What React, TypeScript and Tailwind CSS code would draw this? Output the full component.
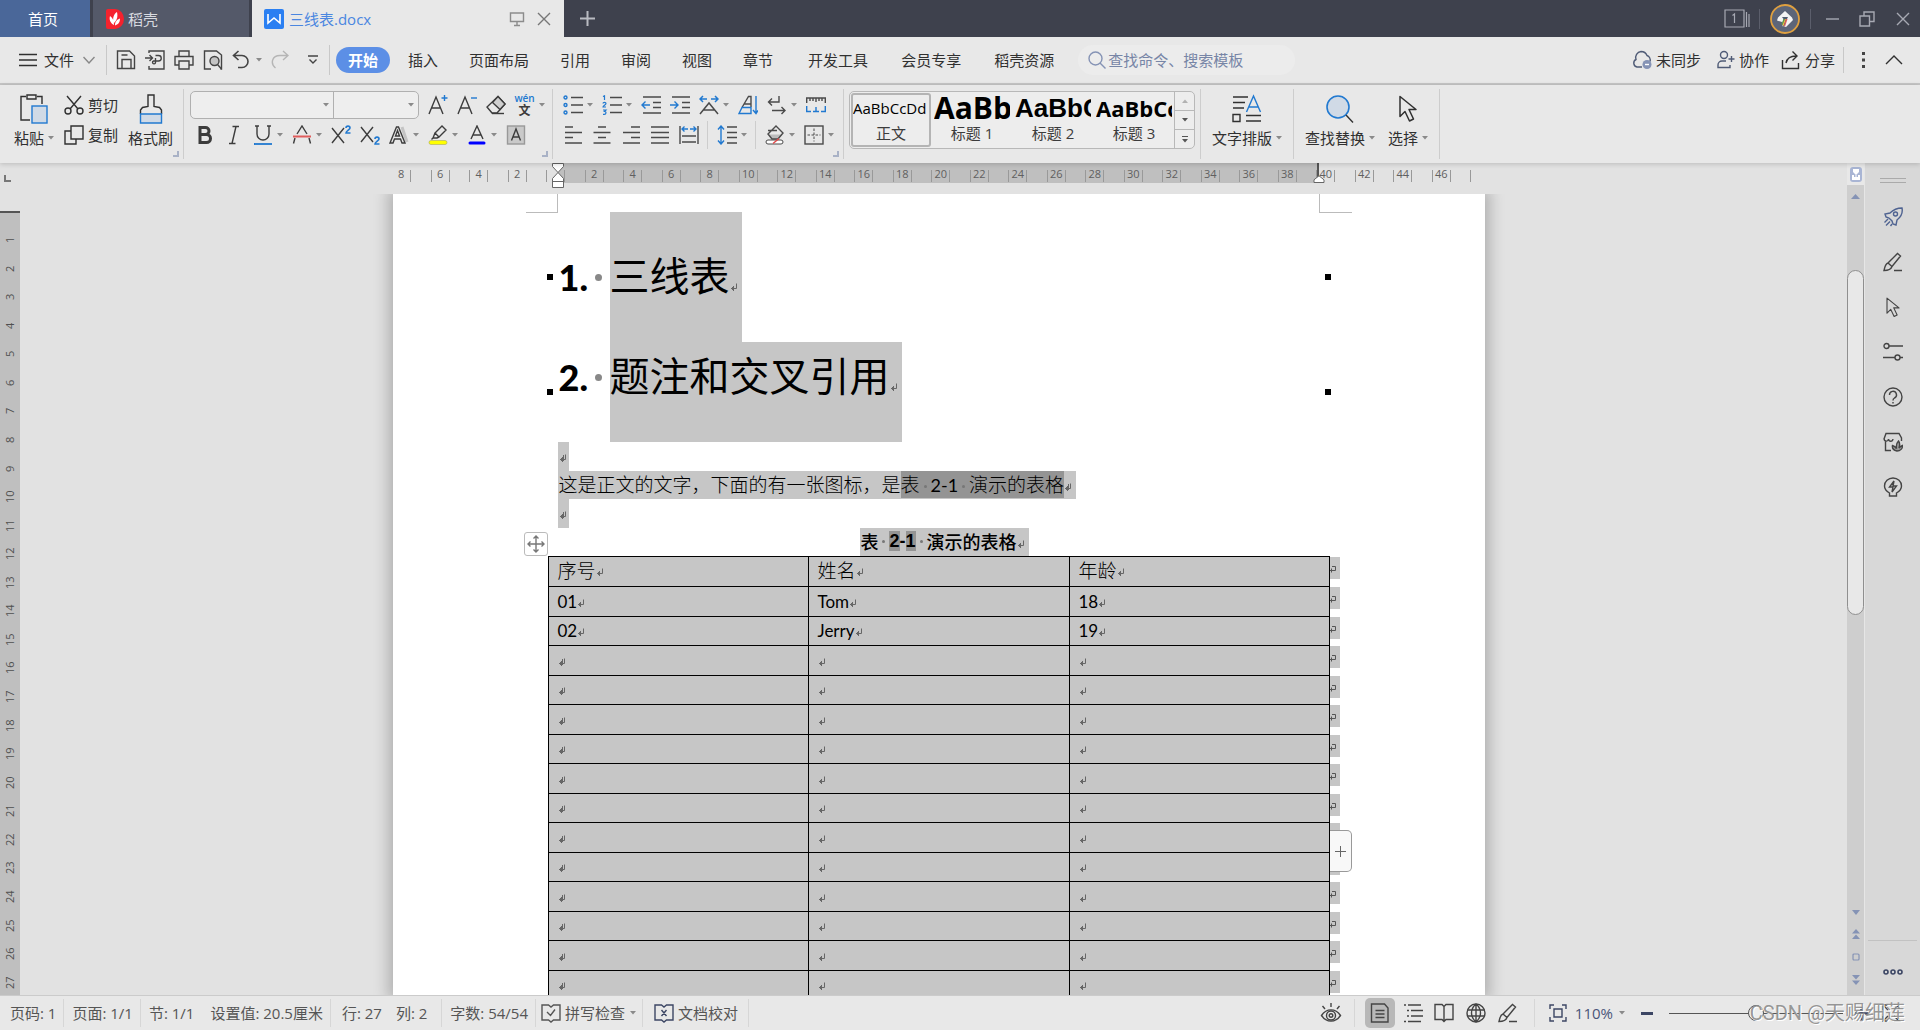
import type { ReactNode } from "react"
import clsx from "clsx"

const MENUS_A = ["插入", "页面布局", "引用", "审阅", "视图", "章节"]
const MENUS_B = ["开发工具", "会员专享", "稻壳资源"]

const STYLES = [
  { name: "正文", sample: "AaBbCcDd", font: "font-['Open_Sans'] text-[15px]" },
  { name: "标题 1", sample: "AaBb", font: "font-['Open_Sans'] text-[30px] font-bold" },
  { name: "标题 2", sample: "AaBbC", font: "font-['Liberation_Sans'] text-[26px] font-bold" },
  { name: "标题 3", sample: "AaBbCc", font: "font-['Open_Sans'] text-[22px] font-bold" },
]

const ROWS = [
  ["01", "Tom", "18"],
  ["02", "Jerry", "19"],
  ...Array.from({ length: 13 }, () => ["", "", ""]),
]

const H_RULER = [8, 6, 4, 2, 0, ...Array.from({ length: 23 }, (_, i) => (i + 1) * 2)]
const V_RULER = Array.from({ length: 27 }, (_, i) => i + 1)

const BLUE = "#2179d0"

type SvgProps = { w?: number; h?: number; sw?: number; className?: string; children: ReactNode }

function Svg({ w = 20, h = 20, sw = 1.4, className, children }: SvgProps) {
  return (
    <svg
      width={w}
      height={h}
      viewBox={`0 0 ${w} ${h}`}
      fill="none"
      stroke="currentColor"
      strokeWidth={sw}
      className={clsx("shrink-0", className)}
      aria-hidden="true"
    >
      {children}
    </svg>
  )
}

function Caret({ className }: { className?: string }) {
  return (
    <svg width="6" height="4" viewBox="0 0 6 4" className={clsx("shrink-0 fill-[#8a8a8a]", className)} aria-hidden="true">
      <path d="M0 0h6L3 3.6z" />
    </svg>
  )
}

function Tool({ label, drop, children }: { label: string; drop?: boolean; children: ReactNode }) {
  return (
    <button aria-label={label} className="flex h-7 shrink-0 items-center">
      <span className="flex w-[29px] justify-center">{children}</span>
      {drop && (
        <span className="w-[10px]">
          <Caret />
        </span>
      )}
    </button>
  )
}

function BigTool({ label, drop, children }: { label: string; drop?: boolean; children: ReactNode }) {
  return (
    <button className="flex shrink-0 flex-col items-center">
      <span className="flex h-9 items-center">{children}</span>
      <span className="flex items-center gap-1 leading-[22px]">
        {label}
        {drop && <Caret />}
      </span>
    </button>
  )
}

function Divider() {
  return <div className="my-1 w-px shrink-0 self-stretch bg-[#cdcdcd]" />
}

function Corner() {
  return <div className="absolute right-1 bottom-1.5 size-1.5 border-r-2 border-b-2 border-[#a9b2c6]" />
}

function Mark({ bold }: { bold?: boolean }) {
  return (
    <Svg w={8} h={9} sw={1} className="inline-block text-[#666]">
      <path d="M6.500 0.500v5H1M3.500 3v5M2.500 4v3M1.500 5v1" />
      {bold && <path d="M4.500 1v6" />}
    </Svg>
  )
}

function Cursor({ w, h }: { w: number; h: number }) {
  return (
    <svg width={w} height={h} viewBox="0 0 20 28" fill="none" stroke="currentColor" strokeWidth="1.5" strokeLinejoin="round" aria-hidden="true">
      <path d="M2 1.5v20l5-5 4.500 9.500 4-2-4.500-9.500h7z" />
    </svg>
  )
}

function PenIcon() {
  return (
    <Svg>
      <path d="M5 11L14.500 1.500l3 2.500L9 14.500z M5 11c-3 1-3 4-4 7.500 4 0 7-1 8-4M11 18.500h8" />
    </Svg>
  )
}

function TitleBar() {
  return (
    <header className="flex h-[37px] shrink-0 bg-[#3e414d] text-[#d8dae0]">
      <button className="w-[90px] bg-[#4a6799] pr-1 text-white">首页</button>
      <button className="ml-[3px] flex w-[156px] items-center gap-1 bg-[#545969] pl-[13px]">
        <svg width="18" height="20" viewBox="0 0 18 20" aria-hidden="true">
          <path d="M2 0h7a9 10 0 0 1 0 20H2a2 2 0 0 1-2-2V2a2 2 0 0 1 2-2z" fill="#f5222d" />
          <path d="M8 16C4 14 3 10 4 7c3 2 4 5 4 9zM8 14C6 9 8 5 11 3c1 5 0 8-3 11zM9 16.500c0-4 2-6 5-7 0 4-2 6-5 7z" fill="#fff" />
        </svg>
        稻壳
      </button>
      <div className="ml-[3px] flex w-[312px] items-center bg-[#e8e8e8] pl-3">
        <svg width="20" height="20" viewBox="0 0 20 20" aria-hidden="true">
          <rect width="20" height="20" rx="2" fill="#2a7ff2" />
          <path d="M4 5v9l6-5 6 5V5" fill="none" stroke="#fff" strokeWidth="1.600" />
        </svg>
        <span className="ml-[5px] text-[#4a86e0]">三线表.docx</span>
        <span className="ml-auto text-[#8c8c8c]">
          <Svg w={16} h={16}>
            <path d="M1.500 2h13v8.500h-13zM8 10.500v3.500M5 14.500h6" />
          </Svg>
        </span>
        <button aria-label="关闭标签" className="mr-[13px] ml-3 text-[#777]">
          <Svg w={14} h={14}>
            <path d="M1 1l12 12M13 1L1 13" />
          </Svg>
        </button>
      </div>
      <button aria-label="新建" className="w-[46px] pl-4 text-[#b9bbc2]">
        <Svg w={15} h={15} sw={2}>
          <path d="M7.500 0v15M0 7.500h15" />
        </Svg>
      </button>
      <div className="ml-auto flex items-center text-[#a7a9b3]">
        <button aria-label="窗口列表">
          <Svg w={26} h={19} sw={1.2}>
            <path d="M1 1h19v17H1zM22.500 3v15M25 5v13M8.500 6.500l2-1.500v9" />
          </Svg>
        </button>
        <span className="ml-[9px] h-5 w-px bg-[#5b5e6b]" />
        <button aria-label="账户" className="mx-2.5">
          <svg width="30" height="30" viewBox="0 0 30 30" aria-hidden="true">
            <circle cx="15" cy="15" r="14" fill="#5d6578" stroke="#dfa040" strokeWidth="1.800" />
            <path d="M15 7l7 6.500 1 2.500-7 7-4-1v-4l-5-1.500 1-3z" fill="#f4f4f4" />
            <path d="M12 13h6l-1 2-3 8-2-2 1.500-6z" fill="#4f5b6e" />
            <path d="M13.500 15l1.500 0-2.500 6-1-1z" fill="#5a9e4b" />
            <path d="M15 15l1 0-2.500 7-1-1z" fill="#f0c040" />
            <path d="M16 15l1.500 0-2.500 7.500-1-.5z" fill="#e05a5a" />
          </svg>
        </button>
        <span className="h-5 w-px bg-[#5b5e6b]" />
        <button aria-label="最小化" className="ml-[15px]">
          <Svg w={13} h={16}>
            <path d="M0 8h13" />
          </Svg>
        </button>
        <button aria-label="还原" className="ml-5">
          <Svg w={16} h={16}>
            <path d="M1 5h9.500v10H1zM5 5V1h10v9.500h-4.500" />
          </Svg>
        </button>
        <button aria-label="关闭" className="mr-2.5 ml-[21px]">
          <Svg w={14} h={14}>
            <path d="M1 1l12 12M13 1L1 13" />
          </Svg>
        </button>
      </div>
    </header>
  )
}

function MenuBar() {
  return (
    <nav className="flex h-12 shrink-0 items-center border-b-2 border-[#c6c6c6] text-[#303030]">
      <button className="ml-[19px] flex items-center text-[#303030]">
        <Svg w={18} h={14}>
          <path d="M0 1.500h18M0 7h18M0 12.500h18" />
        </Svg>
        <span className="ml-[7px]">文件</span>
        <Svg w={12} h={8} className="ml-[9px] text-[#888]">
          <path d="M0.500 1l5.500 6 5.500-6" />
        </Svg>
      </button>
      <span className="ml-[11px] h-[30px] w-px bg-[#c8c8c8]" />
      <div className="ml-[9px] flex items-center gap-[9px] text-[#444]">
        <button aria-label="保存">
          <Svg>
            <path d="M1.500 1h12l5 5v12.500h-17zM6 18.500V9.500h9v9M5.500 5h6" />
          </Svg>
        </button>
        <button aria-label="输出为PDF">
          <Svg>
            <path d="M4 3V1h15v18H4v-3M0 8h7M4.500 5l3 3-3 3M10.500 5.500h3a2.500 2.500 0 0 1 0 5.500h-5a1.500 1.500 0 1 0 2 1.500V8" />
          </Svg>
        </button>
        <button aria-label="打印">
          <Svg>
            <path d="M5 6V1h10v5M5 15H1V6.500h18V15h-4M5 11h10v8H5z" />
          </Svg>
        </button>
        <button aria-label="打印预览">
          <Svg>
            <path d="M8 19H1.500V1h12l5 4v14h-1" />
            <circle cx="11.500" cy="11" r="4.500" fill="#c4c4c4" />
            <path d="M14.500 14.500l4 4.500" />
          </Svg>
        </button>
        <button aria-label="撤销" className="flex items-center gap-1.5">
          <Svg w={18} sw={1.6}>
            <path d="M6.500 1L1.500 5.500l5 4.500M1.500 5.500H10a6 6 0 0 1 0 12H6" />
          </Svg>
          <Caret />
        </button>
        <button aria-label="重做" className="text-[#b5b5b5]">
          <Svg w={18}>
            <path d="M12 1l5 4.500-5 4.500M17 5.500H9c-8 0-10 8-4.500 12.500" />
          </Svg>
        </button>
        <button aria-label="自定义快速访问工具栏" className="ml-2.5">
          <Svg w={10} h={10}>
            <path d="M0 1h10M1.500 4.500L5 8l3.500-3.500" />
          </Svg>
        </button>
      </div>
      <span className="ml-[11px] h-[30px] w-px bg-[#c8c8c8]" />
      <button className="ml-1.5 h-[26px] w-[54px] rounded-full bg-[#5c8fe6] font-bold text-white">开始</button>
      <div className="ml-[18px] flex gap-[31px]">
        {MENUS_A.map((m) => (
          <button key={m}>{m}</button>
        ))}
      </div>
      <div className="ml-[35px] flex gap-[33px]">
        {MENUS_B.map((m) => (
          <button key={m}>{m}</button>
        ))}
      </div>
      <label className="ml-6 flex h-[30px] w-[217px] items-center gap-0.5 rounded-full bg-[#ececec] pl-2.5 text-[#8593b5]">
        <Svg w={18} h={18}>
          <circle cx="7.500" cy="7.500" r="6.500" />
          <path d="M12 12l5.500 5.500" />
        </Svg>
        <input
          aria-label="查找命令、搜索模板"
          placeholder="查找命令、搜索模板"
          className="min-w-0 flex-1 bg-transparent outline-none placeholder:text-[#7785a6]"
        />
      </label>
      <div className="ml-auto flex items-center">
        <button className="flex items-center gap-1">
          <Svg className="text-[#4f5b76]">
            <path d="M10 17H5a4 4 0 0 1-1-7.500A6 6 0 0 1 9 1.500c3 0 5 1.500 6 4a5 5 0 0 1 3 6" />
            <circle cx="15" cy="14.500" r="4.500" fill="#8593b5" stroke="none" />
            <path d="M13 14.500h4" stroke="#fff" />
          </Svg>
          未同步
        </button>
        <button className="ml-4 flex items-center gap-1">
          <Svg w={18} className="text-[#4f5b76]">
            <circle cx="7" cy="5" r="3.500" />
            <path d="M9 11H5a4 4 0 0 0-4 4v2.500h12V15M14.500 6v6M11.500 9h6" />
          </Svg>
          协作
        </button>
        <button className="ml-3 flex items-center gap-1">
          <Svg>
            <path d="M1.500 10v8.500h16V13M5 13c1-5 4-7 10-7M11.500 1.500L16 6l-4.500 4.500" />
          </Svg>
          分享
        </button>
        <span className="ml-2 h-[26px] w-px bg-[#c8c8c8]" />
        <button aria-label="更多" className="ml-[18px]">
          <svg width="3" height="16" viewBox="0 0 3 16" fill="#444" aria-hidden="true">
            <path d="M0 0h3v3H0zM0 6.500h3v3H0zM0 13h3v3H0z" />
          </svg>
        </button>
        <button aria-label="收起功能区" className="mr-[17px] ml-5">
          <Svg w={18} h={10}>
            <path d="M1 9l8-8 8 8" />
          </Svg>
        </button>
      </div>
    </nav>
  )
}

function FontGroup() {
  return (
    <div className="relative flex flex-col gap-0.5 pt-1.5 pr-[3px] pl-1.5 text-[#3c3c3c]">
      <div className="flex">
        <div className="mr-1 flex h-7 w-[229px] rounded-[5px] border border-[#b0b0b0] bg-[#eee]">
          <label className="relative flex flex-1 items-center border-r border-[#b0b0b0]">
            <select aria-label="字体" className="h-full w-full appearance-none bg-transparent" />
            <Caret className="absolute right-1" />
          </label>
          <label className="relative flex w-[84px] items-center">
            <select aria-label="字号" className="h-full w-full appearance-none bg-transparent" />
            <Caret className="absolute right-1" />
          </label>
        </div>
        <Tool label="增大字号">
          <Svg>
            <path d="M1 19L8 2l7 17M3.500 13h9" />
            <path d="M16.500 0v6M13.500 3h6" stroke={BLUE} />
          </Svg>
        </Tool>
        <Tool label="减小字号">
          <Svg>
            <path d="M1 19L8 2l7 17M3.500 13h9" />
            <path d="M14 3h6" stroke={BLUE} />
          </Svg>
        </Tool>
        <Tool label="清除格式">
          <Svg>
            <path d="M12 1.500L19 9l-8 9H6l-5-6z" />
            <path d="M12 1.500L19 9l-5 5.500L6.500 7.500z" fill="#cfcfcf" />
            <path d="M6 18.500h12" />
          </Svg>
        </Tool>
        <Tool label="拼音指南" drop>
          <span className="flex flex-col items-center">
            <span className="font-['Open_Sans'] text-[10px] leading-[11px] font-semibold text-[#2179d0]">wén</span>
            <span className="text-[12px] leading-[14px] font-bold">文</span>
          </span>
        </Tool>
      </div>
      <div className="flex">
        <Tool label="加粗">
          <Svg sw={3}>
            <path d="M5 2.500h5.500a3.500 3.500 0 0 1 0 7H5zM5 9.500h6.500a4 4 0 0 1 0 8H5z" />
          </Svg>
        </Tool>
        <Tool label="倾斜">
          <Svg>
            <path d="M8.500 1.500H15M5 18.500h6.500M12 1.500L8 18.500" />
          </Svg>
        </Tool>
        <Tool label="下划线" drop>
          <Svg>
            <path d="M4 1v8a6 6 0 0 0 12 0V1M2 1h4M14 1h4" />
            <path d="M1 19h18" stroke={BLUE} strokeWidth="1.800" />
          </Svg>
        </Tool>
        <Tool label="删除线" drop>
          <Svg>
            <path d="M5 9L10 1l5 8M3 13l-1.500 5.500M17 13l1.500 5.500" />
            <path d="M1 11.500h18" stroke="#e05c5c" strokeWidth="2" />
          </Svg>
        </Tool>
        <Tool label="上标">
          <Svg>
            <path d="M1 3l12 15M13 3L1 18" />
            <path d="M15 3c0-2.500 4-2.500 4 0 0 1.500-4 3-4 5h4.500" stroke={BLUE} strokeWidth="1.600" />
          </Svg>
        </Tool>
        <Tool label="下标">
          <Svg>
            <path d="M1 2l12 15M13 2L1 17" />
            <path d="M15 14c0-2.500 4-2.500 4 0 0 1.500-4 3-4 5h4.500" stroke={BLUE} strokeWidth="1.600" />
          </Svg>
        </Tool>
        <Tool label="文字效果" drop>
          <Svg>
            <path d="M13 2l5 15" stroke="#c4c4c4" strokeWidth="3" />
            <path d="M1 18L7.500 2h2L16 18h-3l-1.500-4h-6L4 18zM6.500 11h4L8.500 5.500z" />
          </Svg>
        </Tool>
        <Tool label="突出显示" drop>
          <Svg>
            <path d="M7 8l7-7 4 4-7 7zM7 8l-2 5h4l2-1M5 13l-1.500 1.500" />
            <rect x="1" y="15.500" width="18" height="4" rx="2" fill="#ff0" stroke="#a8a860" strokeWidth=".6" />
          </Svg>
        </Tool>
        <Tool label="字体颜色" drop>
          <Svg>
            <path d="M4 14L10 1l6 13M6 10h8" />
            <rect x="1.500" y="16.500" width="17" height="3" rx="1.500" fill="#00f" stroke="none" />
          </Svg>
        </Tool>
        <Tool label="字符底纹">
          <Svg>
            <rect x="1.500" y="1" width="17" height="18" fill="#c9c9c9" stroke="#999" />
            <path d="M5.500 15.500L10 4l4.500 11.500M7 12h6" />
          </Svg>
        </Tool>
      </div>
      <Corner />
    </div>
  )
}

function ParagraphGroup() {
  return (
    <div className="relative flex flex-col gap-0.5 px-[5px] pt-1.5 text-[#4a4a4a]">
      <div className="flex">
        <Tool label="项目符号" drop>
          <Svg>
            <path d="M8 2.500h12M8 10h12M8 17.500h12" />
            <g stroke={BLUE}>
              <circle cx="2.500" cy="2.500" r="1.500" />
              <circle cx="2.500" cy="10" r="1.500" />
              <circle cx="2.500" cy="17.500" r="1.500" />
            </g>
          </Svg>
        </Tool>
        <Tool label="编号" drop>
          <Svg>
            <path d="M8 2.500h12M8 10h12M8 17.500h12" />
            <path d="M1 1.500L2.500 .8V5M1 8.500c0-1.500 3-1.500 3 0C4 9.500 1 11 1 12h3M1 15h3l-1.500 1.500c2 0 2 3-.5 2.800H1" stroke={BLUE} strokeWidth="1.200" />
          </Svg>
        </Tool>
        <Tool label="减少缩进量">
          <Svg>
            <path d="M2 2h18M12 7.500h8M12 12.500h8M2 18h18" />
            <path d="M9 10H1M4.500 6.500L1 10l3.500 3.500" stroke={BLUE} />
          </Svg>
        </Tool>
        <Tool label="增加缩进量">
          <Svg>
            <path d="M2 2h18M12 7.500h8M12 12.500h8M2 18h18" />
            <path d="M0 10h8M4.500 6.500L8 10l-3.500 3.500" stroke={BLUE} />
          </Svg>
        </Tool>
        <Tool label="中文版式" drop>
          <Svg sw={1.5}>
            <path d="M1 19L10 8l9 11M4.500 15h11" />
            <path d="M8 4H1M4 1L1 4l3 3M12 4h7M16 1l3 3-3 3" stroke={BLUE} />
          </Svg>
        </Tool>
        <Tool label="排序">
          <Svg>
            <path d="M4 12.500L10.500 1.500H13V12M6.500 9H13" />
            <path d="M4 12.500L1 18.500h12V12.500zM18 1v17M15 15l3 3.500 2-3" stroke={BLUE} />
          </Svg>
        </Tool>
        <Tool label="显示段落标记" drop>
          <Svg>
            <path d="M12 1v6H2M5 3.500L1.500 7 5 10.500M5 15.500h13M14.500 12l3.500 3.500-3.500 3.500" />
          </Svg>
        </Tool>
        <Tool label="制表位">
          <Svg>
            <path d="M.7 8V3h18.600v5M4 3v3M7 3v3M10 3v4M13 3v3M16 3v3" />
            <path d="M.7 11v5.500H5M7 16.500h6M10 12v4.500M15 16.500h4.300V11" stroke={BLUE} />
          </Svg>
        </Tool>
      </div>
      <div className="flex">
        <Tool label="左对齐">
          <Svg>
            <path d="M2 2h8M2 7.500h17M2 12.500h8M2 18h17" />
          </Svg>
        </Tool>
        <Tool label="居中对齐">
          <Svg>
            <path d="M6 2h8M1.500 7.500h17M6 12.500h8M1.500 18h17" />
          </Svg>
        </Tool>
        <Tool label="右对齐">
          <Svg>
            <path d="M10 2h9M2 7.500h17M10 12.500h9M2 18h17" />
          </Svg>
        </Tool>
        <Tool label="两端对齐">
          <Svg>
            <path d="M1 2h18M1 7.500h18M1 12.500h18M1 18h18" />
          </Svg>
        </Tool>
        <Tool label="分散对齐">
          <Svg>
            <path d="M1 1v18M19 1v18M3 11h14M3 17h14" />
            <path d="M9 4H3M5.500 1.500L3 4l2.500 2.500M11 4h6M14.500 1.500L17 4l-2.500 2.500" stroke={BLUE} />
          </Svg>
        </Tool>
        <div className="mx-1 w-px bg-[#cdcdcd]" />
        <Tool label="行距" drop>
          <Svg>
            <path d="M10 2h10M10 7.500h10M10 12.500h10M10 18h10" />
            <path d="M4 1v18M1 4.500L4 1l3 3.500M1 15.500L4 19l3-3.500" stroke={BLUE} />
          </Svg>
        </Tool>
        <div className="mx-1 w-px bg-[#cdcdcd]" />
        <Tool label="底纹颜色" drop>
          <Svg>
            <path d="M4 9.500h13l-4 4.500H7z" fill="#bbb" stroke="none" />
            <path d="M3 9L11 1l7 7-5 6H7zM3 5.500h9" />
            <rect x="1" y="15" width="17" height="4" rx="2" fill="#fff" strokeWidth="1" />
            <path d="M8 18.500l6-5" stroke="#e04848" />
          </Svg>
        </Tool>
        <Tool label="边框" drop>
          <Svg>
            <rect x="1" y="1" width="18" height="18" />
            <path d="M10 3.500v13M3.500 10h13" strokeDasharray="2.500 1.500" strokeWidth="1" />
          </Svg>
        </Tool>
      </div>
      <Corner />
    </div>
  )
}

function StyleGallery() {
  return (
    <div className="px-[5px] pt-1.5">
      <div className="flex h-[58px] w-[346px] rounded-[5px] border border-[#b8b8b8] bg-[#ededed]">
        <div className="flex flex-1 items-center gap-px pl-px">
          {STYLES.map((s, i) => (
            <button
              key={s.name}
              className={clsx(
                "flex h-[54px] w-20 flex-col items-center rounded-[3px] border-2 text-[#3c3c3c]",
                i === 0 ? "border-[#b4b4b4]" : "border-transparent",
              )}
            >
              <span
                className={clsx(
                  "flex h-8 w-full items-center overflow-hidden leading-none whitespace-nowrap text-black",
                  s.font,
                )}
              >
                {s.sample}
              </span>
              <span className="leading-6">{s.name}</span>
            </button>
          ))}
        </div>
        <div className="flex w-5 flex-col divide-y divide-[#b8b8b8] border-l border-[#b8b8b8]">
          <button aria-label="向上" className="flex flex-1 items-center justify-center">
            <Caret className="rotate-180 opacity-60" />
          </button>
          <button aria-label="向下" className="flex flex-1 items-center justify-center">
            <Caret className="fill-[#555]" />
          </button>
          <button aria-label="其他样式" className="flex flex-1 flex-col items-center justify-center gap-0.5">
            <span className="h-px w-1.5 bg-[#555]" />
            <Caret className="fill-[#555]" />
          </button>
        </div>
      </div>
    </div>
  )
}

function Ribbon() {
  return (
    <section className="relative z-10 flex h-[78px] shrink-0 bg-[#e8e8e8] text-[#303030] shadow-[0_1px_5px_rgba(0,0,0,0.18)]">
      <div className="relative flex items-start pt-1.5 pr-2.5 pl-[14px]">
        <BigTool label="粘贴" drop>
          <Svg w={28} h={30}>
            <path d="M6 2.500H1V26h9M17 2.500h5V10" />
            <path d="M7 1h9v4H7z" />
            <rect x="12" y="12" width="15" height="17" fill="#d0dae6" stroke={BLUE} />
          </Svg>
        </BigTool>
        <div className="ml-2.5 flex flex-col gap-0.5">
          <button className="flex h-7 items-center gap-1">
            <Svg>
              <path d="M3 1l11 13M17 1L6 14" />
              <circle cx="4" cy="16" r="3" />
              <circle cx="16" cy="16" r="3" />
            </Svg>
            剪切
          </button>
          <button className="flex h-7 items-center gap-1">
            <Svg>
              <path d="M7 1h12v13H7zM7 6H1v13h11v-5" />
            </Svg>
            复制
          </button>
        </div>
        <div className="ml-2.5">
          <BigTool label="格式刷">
            <Svg w={24} h={30}>
              <path d="M1.500 20v-4l2-2.500 5.500-1V1h6v11.500l5.500 1 2 2.500v4" />
              <path d="M1.500 20h21v9h-21z" fill="#d0dae6" stroke={BLUE} />
            </Svg>
          </BigTool>
        </div>
        <Corner />
      </div>
      <Divider />
      <FontGroup />
      <Divider />
      <ParagraphGroup />
      <Divider />
      <StyleGallery />
      <Divider />
      <div className="px-[11px] pt-1.5">
        <BigTool label="文字排版" drop>
          <Svg w={30} h={30}>
            <path d="M1 3h15M1 8.500h12M1 14h11M1 20.500h7v7H1zM14 21.500h15M14 27h15" />
            <path d="M14.500 18L21.500 2l7 16M17 13h9" stroke={BLUE} />
          </Svg>
        </BigTool>
      </div>
      <Divider />
      <div className="flex gap-[13px] px-[11px] pt-1.5">
        <BigTool label="查找替换" drop>
          <Svg w={30} h={30}>
            <circle cx="13" cy="13" r="11" fill="#d0dae6" stroke={BLUE} strokeWidth="1.600" />
            <path d="M21 21l7 7.500" />
          </Svg>
        </BigTool>
        <BigTool label="选择" drop>
          <Cursor w={20} h={28} />
        </BigTool>
      </div>
      <Divider />
    </section>
  )
}

function HorizontalRuler() {
  return (
    <div className="flex h-[31px] shrink-0 font-['Open_Sans'] text-[11px] text-[#606060]">
      <div className="w-[30px] shrink-0 pt-3 pl-1">
        <div className="size-[7px] border-b-2 border-l-2 border-[#777]" />
      </div>
      <div className="min-w-0 flex-1">
        <div className="relative mx-auto grid w-[1112px]">
          <div className="col-start-1 row-start-1 ml-[175px] h-5 w-[761px] border-r-2 border-[#555] bg-[#bfbfbf]" />
          <div className="col-start-1 row-start-1 flex w-[1088px] pt-[7px]">
            {H_RULER.map((n, i) => (
              <div key={i} className="flex flex-1 justify-center">
                <span
                  className={clsx(
                    "flex h-3 w-1/2 justify-center border-r border-[#999] leading-[7px]",
                    i > 0 && "border-l",
                  )}
                >
                  {n > 0 && n}
                </span>
              </div>
            ))}
            <span className="h-3 w-[10px] shrink-0 border-r border-[#999]" />
          </div>
          {/* indent handles */}
          <svg className="absolute top-0 left-[169px]" width="12" height="26" viewBox="0 0 12 26" fill="#fff" stroke="#666" aria-hidden="true">
            <path d="M.5.5h11v3L6 9.500.5 3.500zM6 9.500l5.500 6v9H.5v-9zM.5 18.500h11" />
          </svg>
          <svg className="absolute top-3 left-[930px]" width="12" height="8" viewBox="0 0 12 8" fill="#fff" stroke="#666" aria-hidden="true">
            <path d="M6 .8l5 4v2.700H1V4.800z" />
          </svg>
        </div>
      </div>
    </div>
  )
}

function RowEnd() {
  return (
    <div className="flex h-[22px] items-center bg-[#c6c6c6] pt-1">
      <Svg w={8} h={9} sw={1} className="text-[#555]">
        <path d="M2 1.500h3.500v4H0M1.500 3.500v4" />
      </Svg>
    </div>
  )
}

function DocTable() {
  return (
    <table className="-ml-2.5 w-[792px] table-fixed border-collapse font-['Lato','Noto_Sans_CJK_SC',sans-serif] text-[17px] leading-[22px]">
      <colgroup>
        <col className="w-[260px]" />
        <col className="w-[261px]" />
        <col className="w-[260px]" />
        <col className="w-[11px]" />
      </colgroup>
      <thead>
        <tr className="h-[30px]">
          {["序号", "姓名", "年龄"].map((h) => (
            <th
              key={h}
              scope="col"
              className="border border-black bg-[#c6c6c6] pb-0.5 pl-[9px] text-left text-[19px] font-light"
            >
              {h}
              <Mark />
            </th>
          ))}
          <td className="p-0 align-top">
            <RowEnd />
          </td>
        </tr>
      </thead>
      <tbody>
        {ROWS.map((row, r) => (
          <tr key={r} className="odd:h-[30px] even:h-[29px]">
            {row.map((cell, c) => (
              <td key={c} className="border border-black bg-[#c6c6c6] py-0 pl-[9px]">
                {cell}
                <Mark bold={!cell && c === 0} />
              </td>
            ))}
            <td className="p-0 align-top">
              <RowEnd />
            </td>
          </tr>
        ))}
      </tbody>
    </table>
  )
}

function Dot() {
  return <span className="mx-1 inline-block size-[3px] rounded-full bg-[#777] align-middle" />
}

function EmptyLine() {
  return (
    <p className="flex h-[29px] w-[11px] items-center bg-[#c6c6c6] pt-1 pl-px">
      <Mark bold />
    </p>
  )
}

function Heading({ num, last, children }: { num: string; last?: boolean; children: ReactNode }) {
  return (
    <h1 className={clsx("flex", last ? "h-[100px]" : "h-[130px]")}>
      <span
        className={clsx(
          "flex w-[52px] items-center pl-px font-['Lato'] text-[36px] leading-[40px] font-black",
          last && "pb-[30px]",
        )}
      >
        {num}
        <span className="mr-2 ml-auto size-[7px] rounded-full bg-[#888]" />
      </span>
      <span
        className={clsx(
          "flex items-center bg-[#c6c6c6] pr-1 text-[40px] leading-[40px] font-normal",
          last && "pb-[30px]",
        )}
      >
        <span className="pb-1.5">{children}</span>
        <span className="flex pt-5">
          <Mark />
        </span>
      </span>
    </h1>
  )
}

function Page() {
  return (
    <div className="relative mx-auto h-full w-[1092px] bg-white px-[165px] pt-[18px] font-['Noto_Sans_CJK_SC',sans-serif] text-black shadow-[0_0_14px_5px_rgba(0,0,0,0.22)]">
      <div className="absolute top-0 left-[133px] h-[19px] w-8 border-r border-b border-[#bbb]" />
      <div className="absolute top-0 right-[133px] h-[19px] w-[33px] border-b border-l border-[#bbb]" />

      {/* heading frame handles */}
      <div className="absolute top-20 left-[154px] size-1.5 bg-black" />
      <div className="absolute top-20 left-[932px] size-1.5 bg-black" />
      <div className="absolute top-[195px] left-[154px] size-1.5 bg-black" />
      <div className="absolute top-[195px] left-[932px] size-1.5 bg-black" />

      <Heading num="1.">三线表</Heading>
      <Heading num="2." last>
        题注和交叉引用
      </Heading>

      <EmptyLine />
      <p className="flex h-7 w-fit items-center bg-[#c6c6c6] pr-1 pb-0.5 pl-px text-[19px] leading-[26px] font-light whitespace-pre">
        这是正文的文字，下面的有一张图标，是
        <span className="bg-[#949494] whitespace-pre">
          表<Dot />
          <span className="font-['Lato'] text-[18px] font-normal">2-1</span>
          <Dot />
          演示的表格
        </span>
        <span className="flex pt-1.5">
          <Mark bold />
        </span>
      </p>
      <EmptyLine />

      <div className="flex justify-center pl-3">
        <p className="flex h-7 items-center bg-[#c6c6c6] pb-0.5 text-[18px] leading-6 font-medium">
          表<Dot />
          <span className="font-['Liberation_Sans'] font-bold">
            <span className="bg-[#949494]">2</span>-<span className="bg-[#949494]">1</span>
          </span>
          <Dot />
          演示的表格
          <span className="flex pt-1.5 pr-1">
            <Mark />
          </span>
        </p>
      </div>
      <DocTable />

      <button
        aria-label="移动表格"
        className="absolute top-[338px] left-[131px] flex h-6 w-6 items-center justify-center rounded-[3px] border border-[#bbb] bg-white text-[#777]"
      >
        <Svg w={18} h={18}>
          <path d="M9 1v16M1 9h16M6.500 3.500L9 1l2.500 2.500M6.500 14.500L9 17l2.500-2.500M3.500 6.500L1 9l2.500 2.500M14.500 6.500L17 9l-2.500 2.500" />
        </Svg>
      </button>
      <button
        aria-label="添加行"
        className="absolute top-[636px] left-[937px] flex h-[42px] w-[22px] items-center justify-center rounded-r-[5px] border border-l-0 border-[#999] bg-[#f8f8f8] text-[#666]"
      >
        <Svg w={11} h={11} sw={1}>
          <path d="M5.500 0v11M0 5.500h11" />
        </Svg>
      </button>
    </div>
  )
}

function ScrollBar() {
  return (
    <div className="flex w-[17px] shrink-0 flex-col items-center text-[#8593b5]">
      <button aria-label="标尺" className="mt-1 mb-[3px] rounded-[3px] bg-[#a9b5d4]">
        <svg width="12" height="15" viewBox="0 0 12 15" fill="#fff" aria-hidden="true">
          <path d="M3 2h6v3L6 8 3 5zM2 8h2v2h1.500V8h1v2H8V8h2v5H2z" />
        </svg>
      </button>
      <div className="flex w-full flex-1 flex-col items-center bg-[#cecece]">
        <button aria-label="向上滚动" className="flex h-[22px] items-center">
          <svg width="9" height="5" viewBox="0 0 9 5" fill="currentColor" aria-hidden="true">
            <path d="M0 5h9L4.500 0z" />
          </svg>
        </button>
        <div className="mt-[63px] h-[345px] w-[17px] rounded-full border border-[#8f8f8f] bg-[#e8e8e8]" />
        <div className="mt-auto mb-2.5 flex flex-col items-center gap-[14px]">
          <svg width="8" height="5" viewBox="0 0 8 5" fill="currentColor" aria-hidden="true">
            <path d="M0 0h8L4 5z" />
          </svg>
          <svg width="8" height="10" viewBox="0 0 8 10" fill="currentColor" aria-hidden="true">
            <path d="M0 4.500h8L4 0zM0 10h8L4 5.500z" />
          </svg>
          <Svg w={8} h={8} sw={1.2}>
            <rect x="1" y="1" width="6" height="6" rx="1" />
          </Svg>
          <svg width="8" height="10" viewBox="0 0 8 10" fill="currentColor" aria-hidden="true">
            <path d="M0 0h8L4 4.500zM0 5.500h8L4 10z" />
          </svg>
        </div>
      </div>
    </div>
  )
}

function SidePanel() {
  return (
    <aside className="flex w-14 shrink-0 flex-col items-center border-l border-[#e6e6e6] bg-[#d8d8d8] text-[#444]">
      <div className="mt-[15px] h-[5px] w-[26px] border-y border-[#aaa]" />
      <div className="mt-6 flex flex-col gap-[25px]">
        <button aria-label="智能助手" className="text-[#4f6391]">
          <Svg>
            <path d="M19 1c1 5-1 9-5 12l-1 5-3-1-1-3-3-3-3-1-1-3 5-1C10 3 14 1 19 1z" />
            <circle cx="12.500" cy="7" r="2" />
            <path d="M5 12l-3.500 3.500M7 14.500L3 18.500M9 17l-1.500 2" />
          </Svg>
        </button>
        <button aria-label="样式和格式">
          <PenIcon />
        </button>
        <button aria-label="选择窗格" className="flex h-5 w-5 items-center justify-center">
          <Cursor w={16} h={21} />
        </button>
        <button aria-label="属性">
          <Svg>
            <circle cx="3.500" cy="4" r="2.500" />
            <path d="M6 4h14M0 15.500h12M17 15.500h3" />
            <circle cx="14.500" cy="15.500" r="2.500" />
          </Svg>
        </button>
        <button aria-label="帮助中心">
          <Svg>
            <circle cx="10" cy="10" r="9" />
            <path d="M6.500 8a3.500 3.500 0 1 1 5 3c-1 .6-1.500 1-1.500 2.500M10 15v1.500" />
          </Svg>
        </button>
        <button aria-label="稻壳资源库">
          <Svg>
            <path d="M2.500 9v9.500H8M1 7l2-5.500h13L18.500 6v3M1 6c0 4 4 4 4.500 1 .5 3 4 3 4.500 0" />
            <path d="M14 19c-4-1-5-3-4.500-5.500 2 .5 3 1.500 4 3-.5-3 0-5.500 2-7.500 1.500 2 1.500 4 .5 7 1-1.500 2-2 3.500-2.500 0 3-2 5.500-5.500 5.500z" fill="#999" />
          </Svg>
        </button>
        <button aria-label="灵感">
          <Svg>
            <path d="M6.500 16C3 14 1.500 12 1.500 9a8.500 8 0 0 1 17 0c0 3-1.500 5-5 7v3h-7zM11 4l-4.500 6H10l-1 5 4.500-6H10z" />
          </Svg>
        </button>
      </div>
      <div className="mt-auto h-px w-[49px] bg-[#c2c2c2]" />
      <button aria-label="更多面板" className="mt-[27px] mb-[19px] text-[#3c4664]">
        <Svg w={20} h={8} sw={1.6}>
          <circle cx="3" cy="4" r="2" />
          <circle cx="10" cy="4" r="2" />
          <circle cx="17" cy="4" r="2" />
        </Svg>
      </button>
    </aside>
  )
}

function StatusBar() {
  return (
    <footer className="relative flex h-[35px] shrink-0 items-center border-t border-[#cbcbcb] bg-[#e8e8e8] text-[#555]">
      <span className="pl-[10px]">页码: 1</span>
      <span className="ml-[7px] h-7 w-px bg-[#d6d6d6]" />
      <span className="ml-2">页面: 1/1</span>
      <span className="ml-[7px] h-7 w-px bg-[#d6d6d6]" />
      <span className="ml-2">节: 1/1</span>
      <span className="ml-4">设置值: 20.5厘米</span>
      <span className="ml-[7px] h-7 w-px bg-[#d6d6d6]" />
      <span className="ml-[11px]">行: 27</span>
      <span className="ml-3.5">列: 2</span>
      <span className="ml-3.5 h-7 w-px bg-[#d6d6d6]" />
      <span className="ml-2">字数: 54/54</span>
      <span className="ml-[7px] h-7 w-px bg-[#d6d6d6]" />
      <button className="ml-[5px] flex items-center gap-1">
        <Svg>
          <path d="M1 2h6.500L10 4l2.500-2H19v15h-6.500L10 19l-2.500-2H1zM6 9l3.500 3.500L14 6.500" />
        </Svg>
        拼写检查
        <Caret className="ml-px" />
      </button>
      <span className="ml-1.5 h-7 w-px bg-[#d6d6d6]" />
      <button className="ml-[11px] flex items-center gap-1">
        <Svg className="text-[#3c4664]">
          <path d="M1 2h6.500L10 4l2.500-2H19v15h-6.500L10 19l-2.500-2H1zM7.500 7l5 6M12.500 7l-5 6" />
        </Svg>
        文档校对
      </button>
      <span className="ml-2.5 h-7 w-px bg-[#d6d6d6]" />

      <div className="ml-auto flex items-center text-[#444]">
        <button aria-label="护眼模式">
          <Svg w={22}>
            <path d="M1.500 12.500c5-7.500 14-7.500 19 0-5 7.500-14 7.500-19 0zM11 0v4M2.500 3l2.500 3M19.500 3L17 6" />
            <circle cx="11" cy="12.500" r="4.500" />
            <circle cx="11" cy="12.500" r="1.800" />
          </Svg>
        </button>
        <span className="ml-3 h-7 w-px bg-[#d6d6d6]" />
        <button aria-label="页面视图" className="ml-2.5 flex h-[30px] w-[30px] items-center justify-center rounded-[5px] bg-[#b8b8b8]">
          <Svg>
            <path d="M1.500 1h13l3.500 4v14H1.500zM5.500 7.500h9M5.500 11h9M5.500 14.500h9" />
          </Svg>
        </button>
        <button aria-label="大纲视图" className="ml-2">
          <Svg>
            <path d="M1 2h2M5 2h13M4 7.500h2M8 7.500h12M4 13h2M8 13h12M1 18.500h2M5 18.500h13" />
          </Svg>
        </button>
        <button aria-label="阅读版式" className="ml-[11px]">
          <Svg>
            <path d="M1 1.500h7l2 2 2-2h7v15h-7l-2 2-2-2H1zM10 3.500v15" />
          </Svg>
        </button>
        <button aria-label="Web版式" className="ml-3">
          <Svg>
            <circle cx="10" cy="10" r="9" />
            <path d="M10 1v18M1.500 7h17M1.500 13h17M10 1C4 6 4 14 10 19M10 1c6 5 6 13 0 18" />
          </Svg>
        </button>
        <button aria-label="写作模式" className="ml-3">
          <PenIcon />
        </button>
        <span className="ml-4 h-7 w-px bg-[#d6d6d6]" />
        <button aria-label="适合页面" className="ml-3.5 text-[#3c4664]">
          <Svg w={18} h={18}>
            <path d="M1 5V1h4M13 1h4v4M17 13v4h-4M5 17H1v-4M5 5h8v8H5z" />
          </Svg>
        </button>
        <button className="ml-2 flex items-center gap-1.5 text-[#4a5578]">
          110%
          <Caret />
        </button>
        <button aria-label="缩小" className="ml-4 h-[3px] w-3 bg-[#3c4664]" />
        <input
          type="range"
          aria-label="显示比例"
          defaultValue={50}
          className="ml-4 h-px w-[174px] appearance-none bg-[#555] [&::-webkit-slider-thumb]:size-4 [&::-webkit-slider-thumb]:appearance-none [&::-webkit-slider-thumb]:rounded-full [&::-webkit-slider-thumb]:border [&::-webkit-slider-thumb]:border-[#555] [&::-webkit-slider-thumb]:bg-[#eee]"
        />
        <button aria-label="放大" className="ml-3 text-[#3c4664]">
          <Svg w={13} h={13} sw={2.5}>
            <path d="M6.500 0v13M0 6.500h13" />
          </Svg>
        </button>
        <button aria-label="全屏显示" className="mr-5 ml-3.5">
          <Svg w={18} h={18}>
            <path d="M1 6V1h5M12 1h5v5M17 12v5h-5M6 17H1v-5M1 1l5 5M17 1l-5 5M17 17l-5-5M1 17l5-5" />
          </Svg>
        </button>
      </div>
      <span className="pointer-events-none absolute right-[15px] font-['Roboto','Noto_Sans_CJK_SC',sans-serif] text-[20px] leading-6 text-[#8a8a8a]/90 [text-shadow:1px_1px_0_#fff]">
        CSDN @天赐细莲
      </span>
    </footer>
  )
}

export default function App() {
  return (
    <div className="flex h-screen flex-col overflow-hidden bg-[#e8e8e8] font-['Open_Sans','Noto_Sans_CJK_SC',sans-serif] text-[15px] leading-5 whitespace-nowrap">
      <TitleBar />
      <MenuBar />
      <Ribbon />
      <div className="flex min-h-0 flex-1">
        <main className="flex min-w-0 flex-1 flex-col bg-[#e2e2e2]">
          <HorizontalRuler />
          <div className="flex min-h-0 flex-1">
            <div className="mt-[17px] flex w-5 shrink-0 flex-col items-center justify-between border-t-2 border-[#555] bg-[#bfbfbf] pt-[15px] font-['Open_Sans'] text-[11px] text-[#505050]">
              {V_RULER.map((n) => (
                <span key={n} className="flex h-6 rotate-180 items-center justify-center leading-5 [writing-mode:vertical-rl]">
                  {n}
                </span>
              ))}
            </div>
            <div className="min-w-0 flex-1 overflow-hidden pl-2.5">
              <Page />
            </div>
          </div>
        </main>
        <ScrollBar />
        <SidePanel />
      </div>
      <StatusBar />
    </div>
  )
}
